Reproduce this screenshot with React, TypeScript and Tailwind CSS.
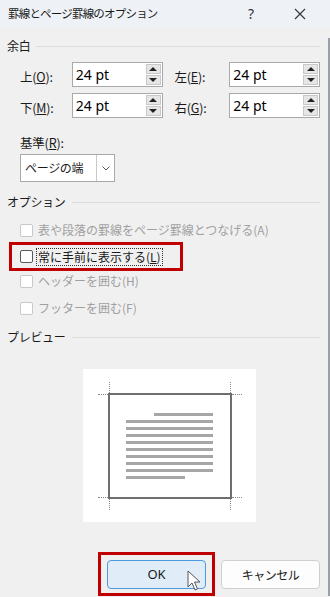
import React from 'react';

const jp = { fontFamily: '"Noto Sans CJK JP", "Noto Sans", sans-serif' };

function GroupHeader({ label, className = '' }: { label: string; className?: string }) {
  return (
    <div className={`flex h-[16px] items-center gap-[6px] ${className}`}>
      <span className="text-[12px] leading-[16px] tracking-[-0.3px] text-[#1a1a1a]">{label}</span>
      <div className="h-px flex-1 bg-[#dcdcdc]" />
    </div>
  );
}

function Spin({ value }: { value: string }) {
  return (
    <div className="flex h-[25px] w-[91px] border border-[#a9a9a9] bg-white">
      <div className="flex flex-1 items-center pl-[3px] text-[14px] text-black" style={{ fontFamily: '"Noto Sans", sans-serif' }}>
        {value}
      </div>
      <div className="flex w-[17px] flex-col gap-px bg-white p-px">
        <div className="flex flex-1 items-center justify-center border border-[#c8c8c8] bg-[#e6e6e6]">
          <div className="h-0 w-0 border-x-[4px] border-b-[4px] border-x-transparent border-b-[#222]" />
        </div>
        <div className="flex flex-1 items-center justify-center border border-[#c8c8c8] bg-[#e6e6e6]">
          <div className="h-0 w-0 border-x-[4px] border-t-[4px] border-x-transparent border-t-[#222]" />
        </div>
      </div>
    </div>
  );
}

function Label({ kanji, key1 }: { kanji: string; key1: string }) {
  return (
    <span className="text-[12.5px] tracking-[-0.2px] text-[#1a1a1a]">
      {kanji}(<span className="underline">{key1}</span>):
    </span>
  );
}

function Box({ dim }: { dim?: boolean }) {
  return (
    <div
      className={`h-[13px] w-[13px] shrink-0 rounded-[2px] border bg-white ${dim ? 'border-[#c8c8c8]' : 'border-[#5a5a5a]'}`}
    />
  );
}

export default function App() {
  const lines = [
    { x: 44, w: 59 },
    { x: 16, w: 87 },
    { x: 16, w: 87 },
    { x: 16, w: 87 },
    { x: 16, w: 87 },
    { x: 16, w: 87 },
    { x: 16, w: 87 },
    { x: 16, w: 87 },
    { x: 16, w: 87 },
    { x: 16, w: 59 },
  ];

  return (
    <div className="relative h-[597px] w-[330px] overflow-hidden bg-[#f0f0f0]" style={jp}>
      <div className="flex h-[27px] items-center bg-[#eef2f7] pl-[8px]">
        <span className="text-[11.5px] tracking-[-0.8px] text-[#1a1a1a]">罫線とページ罫線のオプション</span>
        <span className="ml-auto mr-[40px] text-[14px] text-[#333]" style={{ fontFamily: '"Noto Sans", sans-serif' }}>?</span>
        <svg width="12" height="12" viewBox="0 0 12 12" className="mr-[24px]">
          <path d="M1 1 L11 11 M11 1 L1 11" stroke="#333" strokeWidth="1.1" />
        </svg>
      </div>

      <div className="border-r-[2px] border-[#9aa0a6] pr-[8px] pl-[7px]">
        <GroupHeader label="余白" className="mt-[11px]" />

        <div className="mt-[8px] flex flex-col gap-[6px] pl-[13px]">
          <div className="flex items-center">
            <div className="w-[52px]"><Label kanji="上" key1="O" /></div>
            <Spin value="24 pt" />
            <div className="ml-[12px] w-[55px]"><Label kanji="左" key1="E" /></div>
            <Spin value="24 pt" />
          </div>
          <div className="flex items-center">
            <div className="w-[52px]"><Label kanji="下" key1="M" /></div>
            <Spin value="24 pt" />
            <div className="ml-[12px] w-[55px]"><Label kanji="右" key1="G" /></div>
            <Spin value="24 pt" />
          </div>
        </div>

        <div className="mt-[17px] pl-[13px]">
          <div className="text-[12.5px] leading-[16px] tracking-[-0.2px] text-[#1a1a1a]">
            基準(<span className="underline">R</span>):
          </div>
          <div className="mt-[3px] flex h-[28px] w-[95px] border border-[#a9a9a9] bg-white">
            <div className="flex flex-1 items-center pl-[4px] text-[12px] tracking-[-0.3px] text-[#1a1a1a]">ページの端</div>
            <div className="flex w-[18px] items-center justify-center border-l border-[#c8c8c8]">
              <svg width="8" height="5" viewBox="0 0 8 5">
                <path d="M0.5 0.5 L4 4 L7.5 0.5" fill="none" stroke="#555" strokeWidth="1" />
              </svg>
            </div>
          </div>
        </div>

        <GroupHeader label="オプション" className="mt-[12px]" />

        <div className="mt-[10px] flex flex-col">
          <div className="flex h-[20px] items-center gap-[5px] pl-[13px]">
            <Box dim />
            <span className="text-[12px] text-[#a0a0a0]">表や段落の罫線をページ罫線とつなげる(A)</span>
          </div>
          <div className="ml-[2px] mt-[2px] flex h-[29px] w-[174px] items-center gap-[3px] border-[3px] border-[#c00000] pl-[8px]">
            <Box />
            <span className="border border-dotted border-[#333] px-[1px] text-[12px] leading-[16px] text-[#1a1a1a]">
              常に手前に表示する(<span className="underline">L</span>)
            </span>
          </div>
          <div className="flex h-[20px] items-center gap-[5px] pl-[13px]">
            <Box dim />
            <span className="text-[12px] text-[#a0a0a0]">ヘッダーを囲む(H)</span>
          </div>
          <div className="mt-[7px] flex h-[20px] items-center gap-[5px] pl-[13px]">
            <Box dim />
            <span className="text-[12px] text-[#a0a0a0]">フッターを囲む(F)</span>
          </div>
        </div>

        <GroupHeader label="プレビュー" className="mt-[11px]" />

        <div className="ml-[76px] mt-[24px] flex h-[153px] w-[173px] items-center justify-center bg-white">
          <div className="relative h-[106px] w-[124px] border-[2px] border-[#6e6e6e]">
            <div className="flex flex-col gap-[4px] pt-[18px]">
              {lines.map((l, i) => (
                <div
                  key={i}
                  className="h-[3px] bg-[#a6a6a6]"
                  style={{ marginLeft: l.x, width: l.w }}
                />
              ))}
            </div>
            <div className="absolute -left-[12px] -top-[1px] w-[10px] border-t border-dotted border-[#888]" />
            <div className="absolute -right-[12px] -top-[1px] w-[10px] border-t border-dotted border-[#888]" />
            <div className="absolute -left-[12px] -bottom-[1px] w-[10px] border-t border-dotted border-[#888]" />
            <div className="absolute -right-[12px] -bottom-[1px] w-[10px] border-t border-dotted border-[#888]" />
            <div className="absolute -left-[1px] -top-[13px] h-[11px] border-l border-dotted border-[#888]" />
            <div className="absolute -right-[1px] -top-[13px] h-[11px] border-l border-dotted border-[#888]" />
            <div className="absolute -left-[1px] -bottom-[13px] h-[11px] border-l border-dotted border-[#888]" />
            <div className="absolute -right-[1px] -bottom-[13px] h-[11px] border-l border-dotted border-[#888]" />
          </div>
        </div>

        <div className="mt-[30px] flex items-start justify-end gap-[6px]">
          <div className="flex h-[44px] w-[117px] items-start justify-center border-[3px] border-[#c00000] pt-[5px]">
            <button className="h-[29px] w-[99px] rounded-[4px] border border-[#4c9ae0] bg-[#e0edf9] text-[13px] text-[#1a1a1a]" style={{ fontFamily: '"Noto Sans", sans-serif' }}>
              OK
            </button>
          </div>
          <button className="mt-[8px] h-[29px] w-[99px] rounded-[4px] border border-[#d0d0d0] bg-[#fdfdfd] text-[12px] tracking-[-0.5px] text-[#1a1a1a]">
            キャンセル
          </button>
        </div>
      </div>

      <svg className="absolute left-[187px] top-[570px]" width="14" height="22" viewBox="0 0 14 22">
        <path d="M1 1 L1 17 L5 13 L8 20 L10.5 19 L7.5 12 L13 12 Z" fill="#fff" stroke="#555" strokeWidth="1" strokeLinejoin="round" />
      </svg>
    </div>
  );
}
